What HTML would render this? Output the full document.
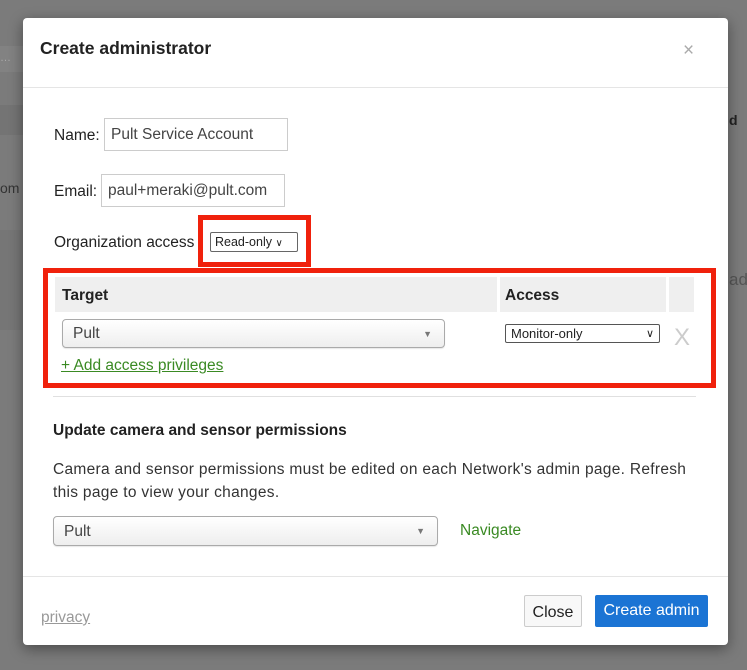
<!DOCTYPE html>
<html><head><meta charset="utf-8"><style>
*{box-sizing:border-box;margin:0;padding:0}
body{width:747px;height:670px;background:#7b7b7b;position:relative;overflow:hidden;font-family:"Liberation Sans",sans-serif;color:#222}
.a{position:absolute}
.modal{left:23px;top:18px;width:705px;height:627px;background:#fff;border-radius:4px;box-shadow:0 4px 14px rgba(0,0,0,.4)}
.inp{border:1px solid #ccc;background:#fff;font-size:15.5px;color:#444;padding-left:6px;line-height:31px}
.sel2{border:1px solid #aaa;border-radius:4px;background:linear-gradient(#fff,#eee);font-size:15.5px;color:#444;padding-left:10px;box-shadow:0 1px 1px rgba(0,0,0,.1)}
.red{border:5px solid #f0210c}
.g{color:#3a8a23}
.t{font-size:15.5px}
</style></head><body>
<div class="a" style="left:0;top:46px;width:23px;height:26px;background:#828282"></div>
<div class="a" style="left:0;top:52px;color:#aaa;font-size:11px">…</div>
<div class="a" style="left:0;top:105px;width:23px;height:30px;background:#747474"></div>
<div class="a" style="left:0;top:180px;color:#333;font-size:14px">om</div>
<div class="a" style="left:0;top:230px;width:23px;height:100px;background:#767676"></div>
<div class="a" style="left:729px;top:112px;color:#222;font-size:14px;font-weight:bold">d</div>
<div class="a" style="left:729px;top:270px;color:#555;font-size:17px">ad</div>
<div class="a modal">
 <div class="a" style="left:17px;top:20px;font-size:17.5px;font-weight:bold;color:#222">Create administrator</div>
 <div class="a" style="left:660px;top:22px;font-size:19px;color:#aaa">×</div>
 <div class="a" style="left:0;top:69px;width:705px;height:1px;background:#e5e5e5"></div>
 <div class="a t" style="left:31px;top:109px">Name:</div>
 <div class="a inp" style="left:81px;top:100px;width:184px;height:33px">Pult Service Account</div>
 <div class="a t" style="left:31px;top:165px">Email:</div>
 <div class="a inp" style="left:78px;top:156px;width:184px;height:33px">paul+meraki@pult.com</div>
 <div class="a t" style="left:31px;top:216px">Organization access</div>
 <div class="a red" style="left:175px;top:197px;width:113px;height:52px"></div>
 <div class="a" style="left:187px;top:214px;width:88px;height:20px;border:1px solid #666;border-radius:2px;background:#fff;font-size:12.5px;padding:2px 4px">Read-only <span style="font-size:10px">∨</span></div>
 <div class="a red" style="left:20px;top:250px;width:673px;height:120px"></div>
 <div class="a" style="left:32px;top:259px;width:442px;height:35px;background:#efefef"></div>
 <div class="a" style="left:477px;top:259px;width:166px;height:35px;background:#efefef"></div>
 <div class="a" style="left:646px;top:259px;width:25px;height:35px;background:#efefef"></div>
 <div class="a t" style="left:39px;top:269px;font-weight:bold">Target</div>
 <div class="a t" style="left:482px;top:269px;font-weight:bold">Access</div>
 <div class="a sel2" style="left:39px;top:301px;width:383px;height:29px;line-height:28px">Pult<span style="position:absolute;right:12px;font-size:9px;color:#777">▼</span></div>
 <div class="a" style="left:482px;top:306px;width:155px;height:19px;border:1px solid #555;border-radius:2px;font-size:13px;padding:1px 5px;line-height:16px">Monitor-only<span style="position:absolute;right:5px;font-size:11px">∨</span></div>
 <div class="a" style="left:651px;top:306px;font-size:24px;color:#ccc">X</div>
 <div class="a g t" style="left:38px;top:339px;text-decoration:underline">+ Add access privileges</div>
 <div class="a" style="left:30px;top:378px;width:643px;height:1px;background:#e0e0e0"></div>
 <div class="a t" style="left:30px;top:404px;font-weight:bold">Update camera and sensor permissions</div>
 <div class="a t" style="left:30px;top:440px;line-height:23px;width:650px;letter-spacing:0.3px;color:#333">Camera and sensor permissions must be edited on each Network's admin page. Refresh this page to view your changes.</div>
 <div class="a sel2" style="left:30px;top:498px;width:385px;height:30px;line-height:29px">Pult<span style="position:absolute;right:12px;font-size:9px;color:#777">▼</span></div>
 <div class="a g t" style="left:437px;top:504px">Navigate</div>
 <div class="a" style="left:0;top:558px;width:705px;height:1px;background:#e5e5e5"></div>
 <div class="a t" style="left:18px;top:591px;color:#999;text-decoration:underline">privacy</div>
 <div class="a" style="left:501px;top:577px;width:58px;height:32px;border:1px solid #ccc;border-radius:2px;background:#f8f8f8;font-size:16px;text-align:center;line-height:34px">Close</div>
 <div class="a" style="left:572px;top:577px;width:113px;height:32px;background:#1b74d4;border-radius:2px;color:#fff;font-size:16px;text-align:center;line-height:32px">Create admin</div>
</div>
</body></html>
